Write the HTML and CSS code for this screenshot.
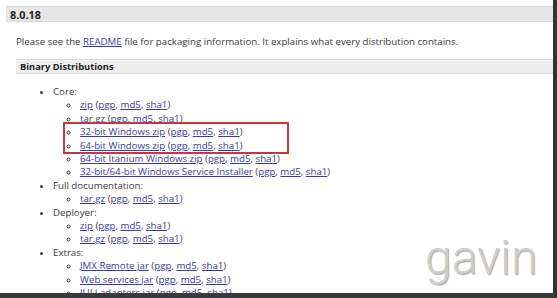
FILE: index.html
```html
<!DOCTYPE html>
<html lang="en">
<head>
  <meta charset="UTF-8" />
  <title>Tomcat 8.0.18</title>
  <link rel="stylesheet" href="styles.css">
</head>
<body>

  <div class="frame">
    <!-- release header -->
    <h3 class="release">8.0.18</h3>

    <div class="release-body">
      <p class="intro">Please see the <a href="#">README</a> file for packaging information. It explains what every distribution contains.</p>

      <h4 class="sub-title">Binary Distributions</h4>

      <div class="list-wrap">
        <ul class="dist">
          <li>Core:
            <ul>
              <li><a href="#">zip</a> (<a href="#">pgp</a>, <a href="#">md5</a>, <a href="#">sha1</a>)</li>
              <li><a href="#">tar.gz</a> (<a href="#">pgp</a>, <a href="#">md5</a>, <a href="#">sha1</a>)</li>
              <li><a href="#">32-bit Windows zip</a> (<a href="#">pgp</a>, <a href="#">md5</a>, <a href="#">sha1</a>)</li>
              <li><a href="#">64-bit Windows zip</a> (<a href="#">pgp</a>, <a href="#">md5</a>, <a href="#">sha1</a>)</li>
              <li><a href="#">64-bit Itanium Windows zip</a> (<a href="#">pgp</a>, <a href="#">md5</a>, <a href="#">sha1</a>)</li>
              <li><a href="#">32-bit/64-bit Windows Service Installer</a> (<a href="#">pgp</a>, <a href="#">md5</a>, <a href="#">sha1</a>)</li>
            </ul>
          </li>
          <li>Full documentation:
            <ul>
              <li><a href="#">tar.gz</a> (<a href="#">pgp</a>, <a href="#">md5</a>, <a href="#">sha1</a>)</li>
            </ul>
          </li>
          <li>Deployer:
            <ul>
              <li><a href="#">zip</a> (<a href="#">pgp</a>, <a href="#">md5</a>, <a href="#">sha1</a>)</li>
              <li><a href="#">tar.gz</a> (<a href="#">pgp</a>, <a href="#">md5</a>, <a href="#">sha1</a>)</li>
            </ul>
          </li>
          <li>Extras:
            <ul>
              <li><a href="#">JMX Remote jar</a> (<a href="#">pgp</a>, <a href="#">md5</a>, <a href="#">sha1</a>)</li>
              <li><a href="#">Web services jar</a> (<a href="#">pgp</a>, <a href="#">md5</a>, <a href="#">sha1</a>)</li>
              <li><a href="#">JULI adapters jar</a> (<a href="#">pgp</a>, <a href="#">md5</a>, <a href="#">sha1</a>)</li>
            </ul>
          </li>
        </ul>

        <!-- red annotation box -->
        <div class="mark-box"></div>
      </div>
    </div>

    <!-- watermark -->
    <div class="watermark">gavin</div>
  </div>

</body>
</html>
```

FILE: styles.css
```css
* {
  box-sizing: border-box;
}

body {
  margin: 0;
  padding: 0;
  background-color: #ffffff;
  font-family: 'Open Sans', 'Liberation Sans', sans-serif;
  font-size: 9.7px;
  color: #3a3a3a;
}

.frame {
  position: relative;
  width: 557px;
  height: 298px;
  overflow: hidden;
  background-color: #ffffff;
  border-right: 4px solid #333333;
  border-bottom: 5px solid #3a3a3a;
  padding: 6px 0 0 6px;
}

a {
  color: #3b3b9e;
  text-decoration: underline;
}

.release {
  margin: 0;
  height: 16px;
  background-color: #e6e6e6;
  border-top: 1px solid #d6d6d6;
  border-bottom: 1px solid #d9d9d9;
  padding: 0 4px;
  font-size: 10.8px;
  font-weight: bold;
  line-height: 15px;
  color: #222222;
}

.release-body {
  padding: 0 0 0 10px;
}

.intro {
  margin: 13px 0 0;
  line-height: 14px;
}

.sub-title {
  margin: 10px 0 0;
  height: 15px;
  background-color: #eeeeee;
  border-top: 1px solid #dcdcdc;
  border-bottom: 1px solid #dcdcdc;
  padding: 0 4px;
  font-size: 9.3px;
  font-weight: bold;
  line-height: 13px;
  color: #222222;
}

.list-wrap {
  position: relative;
}

.dist {
  margin: 11px 0 0;
  padding-left: 37px;
  line-height: 13.4px;
  list-style: disc;
}

.dist ul {
  margin: 0;
  padding-left: 27px;
  list-style: circle;
}

.mark-box {
  position: absolute;
  left: 47px;
  top: 37px;
  width: 226px;
  height: 32px;
  border: 2px solid #c4383d;
}

.watermark {
  position: absolute;
  left: 425px;
  top: 229px;
  font-family: 'Roboto', 'Liberation Sans', sans-serif;
  font-weight: 300;
  font-size: 48px;
  color: #cdcdcd;
  text-shadow: 1px 1px 1px #a8a8a8;
}
```
